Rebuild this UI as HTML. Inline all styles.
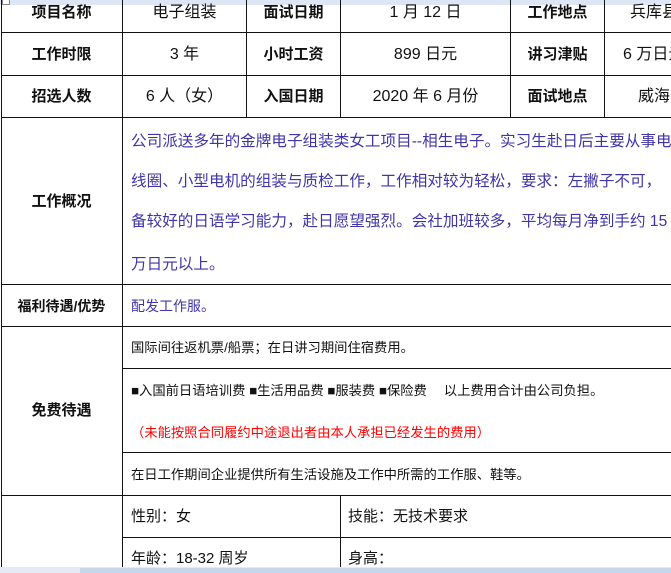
<!DOCTYPE html>
<html><head><meta charset="utf-8"><style>
body{margin:0;width:671px;height:573px;overflow:hidden;background:#fff;position:relative;font-family:"Liberation Sans","Noto Sans CJK SC",sans-serif;color:#111}
.h{position:absolute;height:1px;background:#111}
.v{position:absolute;width:1px;background:#111}
.t{position:absolute;white-space:nowrap;font-size:16px;line-height:18px}
.b{font-weight:bold;font-size:15px}
.c{text-align:center}
.p{color:#4035a8;font-size:15.6px}
.s{font-size:13.3px}
</style></head><body>
<div style="position:absolute;left:0;top:0;width:671px;height:5px;background:#dce6f4"></div>
<div style="position:absolute;left:2px;top:0;width:6px;height:4px;border:1px solid #888;border-top:none;background:#fff"></div>
<div style="position:absolute;left:0;top:567px;width:671px;height:6px;background:#e4ebf5"></div>
<div style="position:absolute;left:80px;top:568px;width:591px;height:5px;background:#c8d6ea"></div>
<div class="h" style="left:1px;top:32px;width:670px"></div>
<div class="h" style="left:1px;top:75px;width:670px"></div>
<div class="h" style="left:1px;top:117px;width:670px"></div>
<div class="h" style="left:1px;top:284px;width:670px"></div>
<div class="h" style="left:1px;top:326px;width:670px"></div>
<div class="h" style="left:123px;top:368px;width:548px"></div>
<div class="h" style="left:123px;top:452px;width:548px"></div>
<div class="h" style="left:1px;top:495px;width:670px"></div>
<div class="h" style="left:123px;top:537px;width:548px"></div>
<div class="v" style="left:1px;top:0;height:567px"></div>
<div class="v" style="left:122px;top:0;height:567px"></div>
<div class="v" style="left:246px;top:0;height:117px"></div>
<div class="v" style="left:340px;top:0;height:117px"></div>
<div class="v" style="left:510px;top:0;height:117px"></div>
<div class="v" style="left:604px;top:0;height:117px"></div>
<div class="v" style="left:340px;top:495px;height:72px"></div>
<div class="t b c" style="left:1px;top:4px;width:121px">项目名称</div>
<div class="t c" style="left:123px;top:4px;width:123px">电子组装</div>
<div class="t b c" style="left:247px;top:4px;width:93px">面试日期</div>
<div class="t c" style="left:341px;top:4px;width:169px">1 月 12 日</div>
<div class="t b c" style="left:511px;top:4px;width:93px">工作地点</div>
<div class="t" style="left:630px;top:4px">兵库县</div>
<div class="t b c" style="left:1px;top:46px;width:121px">工作时限</div>
<div class="t c" style="left:123px;top:46px;width:123px">3 年</div>
<div class="t b c" style="left:247px;top:46px;width:93px">小时工资</div>
<div class="t c" style="left:341px;top:46px;width:169px">899 日元</div>
<div class="t b c" style="left:511px;top:46px;width:93px">讲习津贴</div>
<div class="t" style="left:623px;top:46px">6 万日元</div>
<div class="t b c" style="left:1px;top:88px;width:121px">招选人数</div>
<div class="t c" style="left:123px;top:88px;width:123px">6 人（女）</div>
<div class="t b c" style="left:247px;top:88px;width:93px">入国日期</div>
<div class="t c" style="left:341px;top:88px;width:169px">2020 年 6 月份</div>
<div class="t b c" style="left:511px;top:88px;width:93px">面试地点</div>
<div class="t" style="left:638px;top:88px">威海</div>
<div class="t b c" style="left:1px;top:193px;width:121px">工作概况</div>
<div class="t p" style="left:131px;top:133px">公司派送多年的金牌电子组装类女工项目--相生电子。实习生赴日后主要从事电</div>
<div class="t p" style="left:131px;top:173px">线圈、小型电机的组装与质检工作，工作相对较为轻松，要求：左撇子不可，</div>
<div class="t p" style="left:131px;top:213px">备较好的日语学习能力，赴日愿望强烈。会社加班较多，平均每月净到手约 15</div>
<div class="t p" style="left:131px;top:256px">万日元以上。</div>
<div class="t b c" style="left:1px;top:297px;width:121px;font-size:14px">福利待遇/优势</div>
<div class="t p" style="left:131px;top:297px;font-size:14px">配发工作服。</div>
<div class="t b c" style="left:1px;top:402px;width:121px">免费待遇</div>
<div class="t s" style="left:131px;top:339px">国际间往返机票/船票；在日讲习期间住宿费用。</div>
<div class="t s" style="left:131px;top:382px">■入国前日语培训费 ■生活用品费 ■服装费 ■保险费　 以上费用合计由公司负担。</div>
<div class="t s" style="left:131px;top:424px;color:#f00">（未能按照合同履约中途退出者由本人承担已经发生的费用）</div>
<div class="t s" style="left:131px;top:466px">在日工作期间企业提供所有生活设施及工作中所需的工作服、鞋等。</div>
<div class="t" style="left:131px;top:508px;font-size:15px">性别：女</div>
<div class="t" style="left:348px;top:508px;font-size:15px">技能：无技术要求</div>
<div class="t" style="left:131px;top:550px;font-size:15px">年龄：18-32 周岁</div>
<div class="t" style="left:348px;top:550px;font-size:15px">身高：</div>
</body></html>
